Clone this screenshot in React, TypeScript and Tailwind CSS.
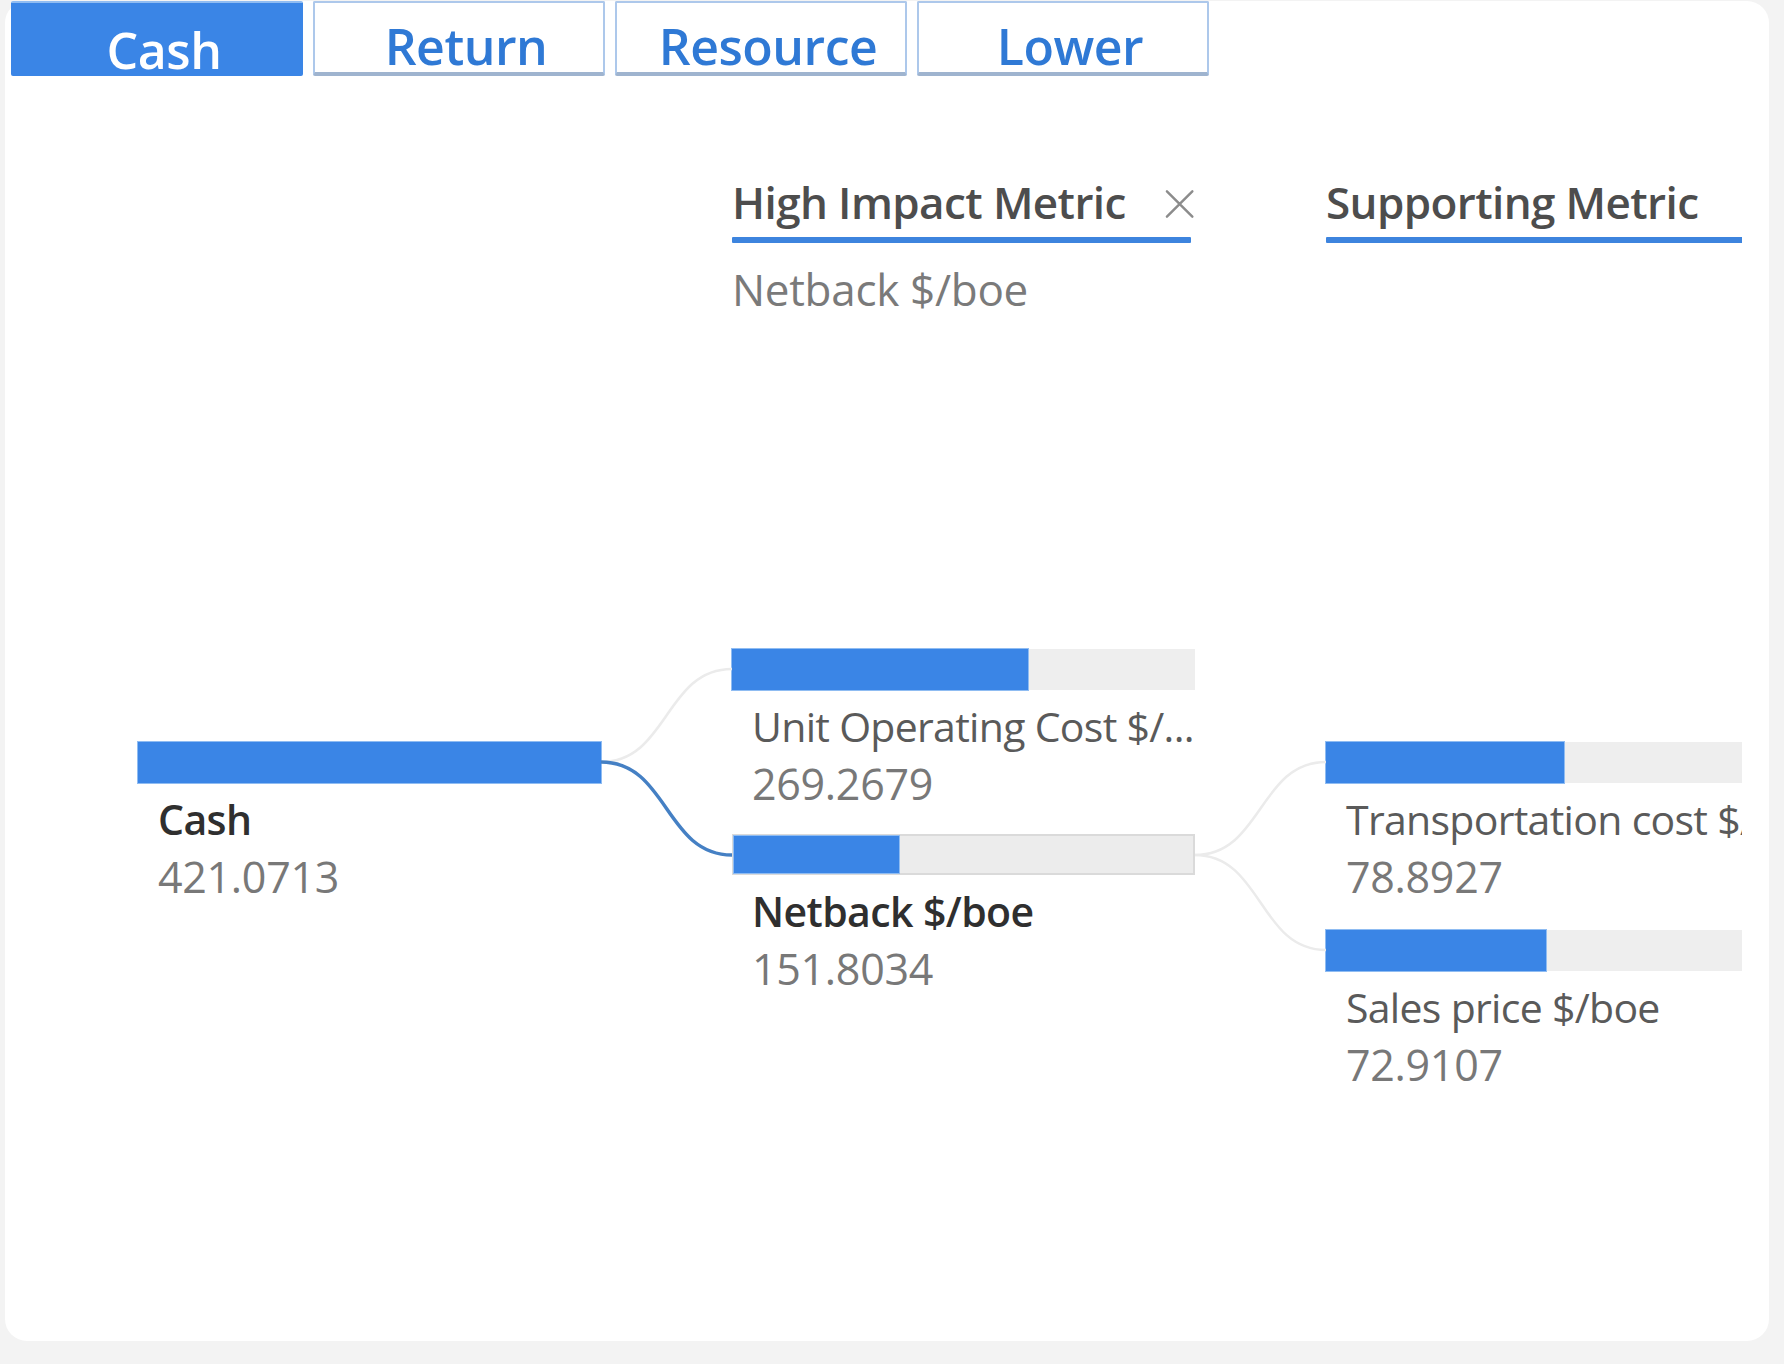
import React from "react";

type NodeProps = {
  label: string;
  value: string;
  pct: number;
  bold?: boolean;
  selected?: boolean;
  className?: string;
};

function TreeNode({ label, value, pct, bold, selected, className }: NodeProps) {
  return (
    <div className={"w-[463px] shrink-0 " + (className ?? "")}>
      <div
        className={
          "h-[41px] w-full flex " +
          (selected
            ? "bg-[#ececec] border-2 border-[#dadada]"
            : "bg-[#eeeeee]")
        }
      >
        <div
          className="h-full bg-[#3a85e6] shadow-[0_0_0_1px_#8fbcf2]"
          style={{ width: pct + "%" }}
        />
      </div>
      <div className="pl-[20px] mt-[7px]">
        <div
          className={
            "text-[41px] leading-[58px] whitespace-nowrap " +
            (bold ? "font-semibold text-[#2f2f2f] tracking-[-0.6px]" : "text-[#5a5a5a] tracking-[-0.7px]")
          }
        >
          {label}
        </div>
        <div className="text-[43px] leading-[58px] text-[#787878] tracking-[-0.3px]">{value}</div>
      </div>
    </div>
  );
}

function Tab({ label, active }: { label: string; active?: boolean }) {
  return (
    <div
      className={
        "w-[292px] h-[75px] flex items-end justify-center pb-[1px] pl-[14px] rounded-[2px] " +
        (active
          ? "bg-[#3a85e6] border-t-2 border-[#8fbcf2] text-white"
          : "bg-white border-2 border-[#adc8eb] border-b-[4px] border-b-[#9fb4cf] text-[#2f79d5]")
      }
    >
      <span className="text-[50px] leading-none font-semibold tracking-[-0.5px]">{label}</span>
    </div>
  );
}

function Header({ title, closable }: { title: string; closable?: boolean }) {
  return (
    <div>
      <div className="flex items-center h-[52px]">
        <span className="text-[44px] leading-[52px] font-semibold text-[#4d4d4d] whitespace-nowrap tracking-[-0.6px]">
          {title}
        </span>
        {closable && (
          <svg
            width="32"
            height="32"
            viewBox="0 0 32 32"
            className="ml-[38px] mt-[4px]"
          >
            <path d="M3 3 L29 29 M29 3 L3 29" stroke="#8c8c8c" strokeWidth="2.5" strokeLinecap="round" />
          </svg>
        )}
      </div>
      <div className={"mt-[9px] h-[6px] bg-[#3d84de] rounded-[1px] " + (closable ? "w-[459px]" : "w-full")} />
    </div>
  );
}

export default function App() {
  return (
    <div className="relative w-[1784px] h-[1364px] bg-[#f3f3f3] overflow-hidden font-['Open_Sans',sans-serif]">
      <div className="ml-[5px] pt-[6px]">
        <div className="w-[1764px] h-[1340px] bg-white rounded-[22px]">
          <div className="flex gap-[10px] pl-[6px] -mt-[5px] h-[75px]">
            <Tab label="Cash" active />
            <Tab label="Return" />
            <Tab label="Resource" />
            <Tab label="Lower" />
          </div>
          <div className="w-[1737px] h-[1264px] overflow-hidden">
            <div className="flex items-start pt-[100px] pl-[133px] gap-[131px]">
              <div className="w-[463px] shrink-0 flex flex-col">
                <TreeNode className="mt-[566px]" label="Cash" value="421.0713" pct={100} bold />
              </div>
              <div className="w-[463px] shrink-0 flex flex-col">
                <Header title="High Impact Metric" closable />
                <div className="mt-[20px] h-[52px] text-[44px] leading-[52px] text-[#7a7a7a] tracking-[-0.3px]">
                  Netback $/boe
                </div>
                <TreeNode className="mt-[334px]" label="Unit Operating Cost $/..." value="269.2679" pct={63.9} />
                <TreeNode className="mt-[21px]" label="Netback $/boe" value="151.8034" pct={36} bold selected />
              </div>
              <div className="w-[463px] shrink-0 flex flex-col">
                <Header title="Supporting Metric" />
                <div className="mt-[20px] h-[52px]" />
                <TreeNode className="mt-[427px]" label="Transportation cost $/boe" value="78.8927" pct={51.4} />
                <TreeNode className="mt-[24px]" label="Sales price $/boe" value="72.9107" pct={47.5} />
              </div>
            </div>
          </div>
        </div>
      </div>
      <svg
        className="absolute left-0 top-0 pointer-events-none"
        width="1784"
        height="1364"
        viewBox="0 0 1784 1364"
        fill="none"
      >
        <path d="M601 762 C 668 762, 665 669, 732 669" stroke="#ebebeb" strokeWidth="2.5" />
        <path d="M1195 855 C 1262 855, 1259 762, 1326 762" stroke="#ebebeb" strokeWidth="2.5" />
        <path d="M1195 855 C 1262 855, 1259 950, 1326 950" stroke="#ebebeb" strokeWidth="2.5" />
        <path d="M601 762 C 668 762, 665 855, 732 855" stroke="#4580c4" strokeWidth="3.5" />
      </svg>
    </div>
  );
}
